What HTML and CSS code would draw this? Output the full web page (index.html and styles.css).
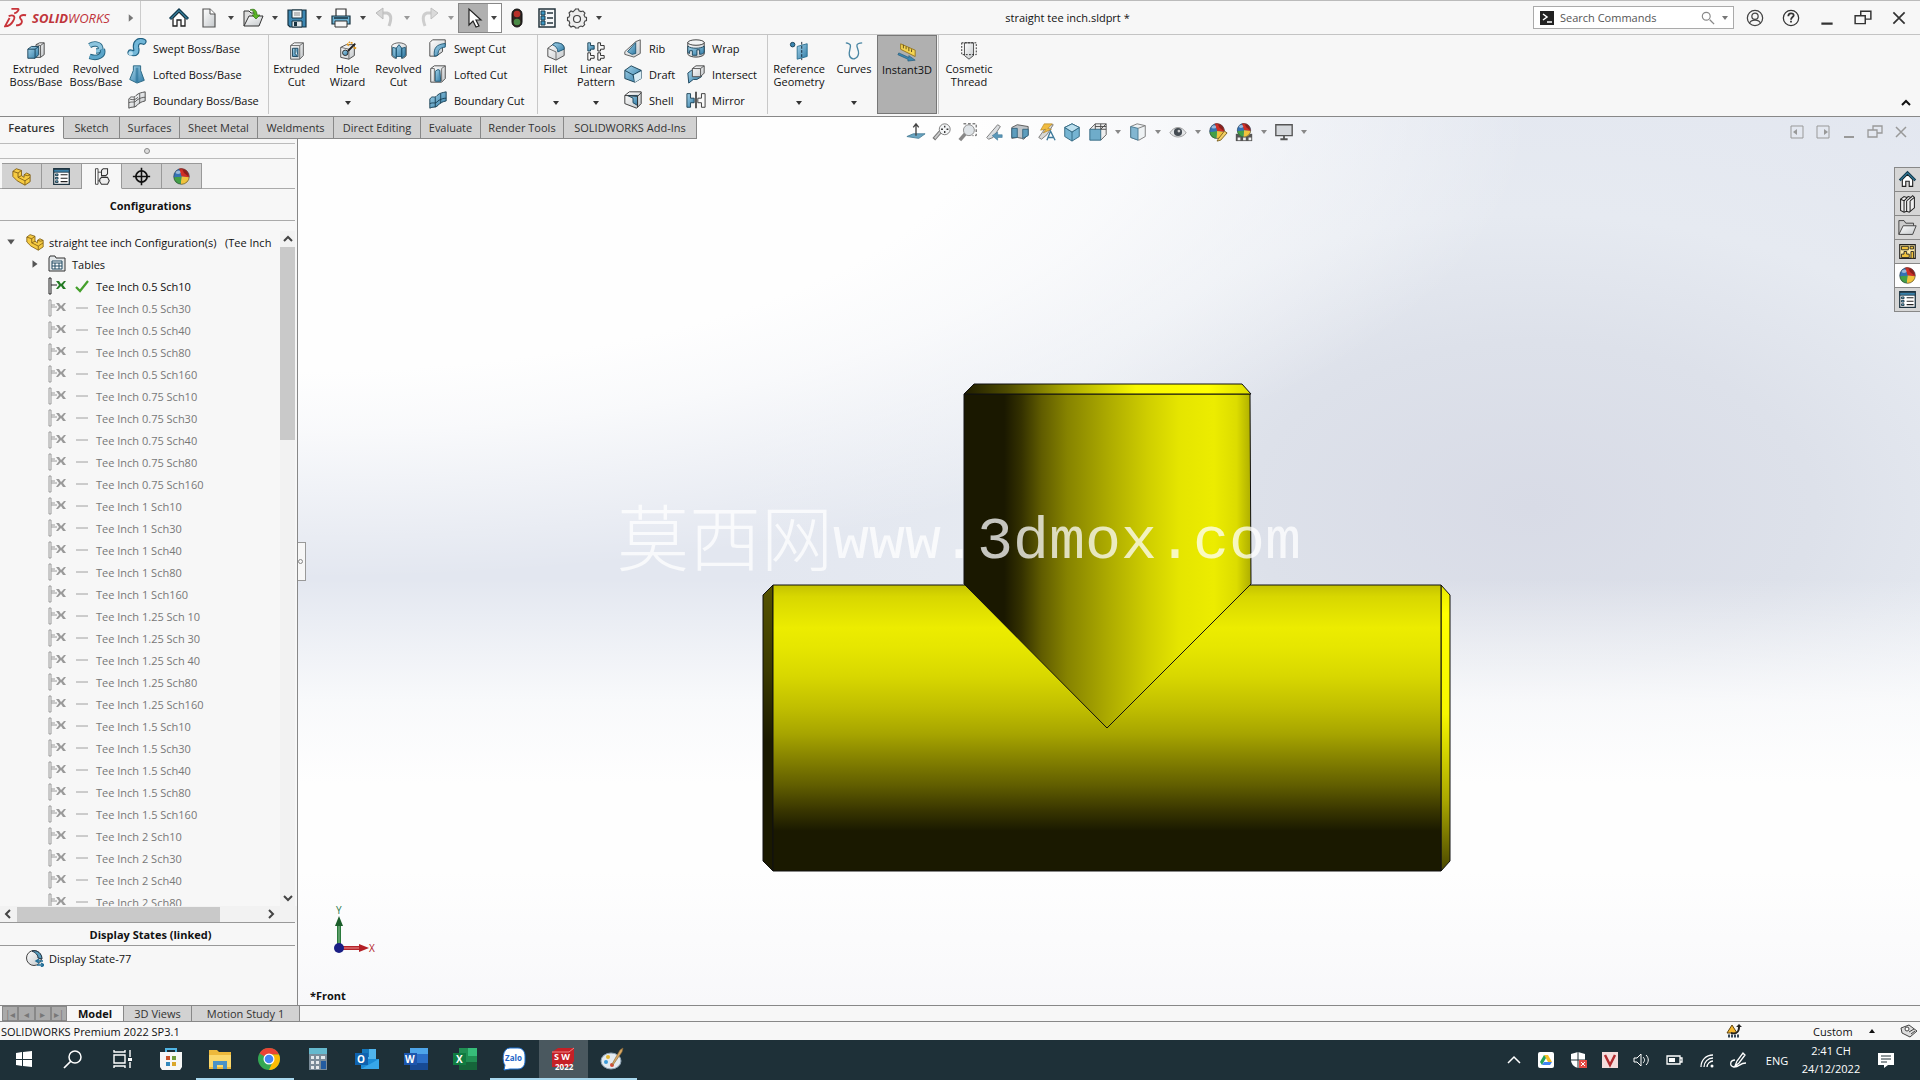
FILE: index.html
```html
<!DOCTYPE html>
<html lang="en">
<head>
<meta charset="utf-8">
<title>straight tee inch.sldprt</title>
<link rel="stylesheet" href="styles.css">
</head>
<body>
<svg class="defs" aria-hidden="true">
  <defs>
    <linearGradient id="blue" x1="0" y1="0" x2="1" y2="1"><stop offset="0" stop-color="#a6d4ea"/><stop offset="1" stop-color="#2f7ba6"/></linearGradient>
    <linearGradient id="grey" x1="0" y1="0" x2="1" y2="1"><stop offset="0" stop-color="#fff"/><stop offset="1" stop-color="#c4c8cb"/></linearGradient>
    <symbol id="caret" viewBox="0 0 8 8"><path d="M1 2h6L4 6z" fill="currentColor"/></symbol>
    <symbol id="home" viewBox="0 0 22 22"><path d="M5 11v8h4v-6h4v6h4v-8l-6-6z" fill="#fff" stroke="#222" stroke-width="1.3"/><path d="M2 12 11 3l9 9" fill="none" stroke="#123b50" stroke-width="3"/><path d="M3 11.500 11 3.500l8 8" fill="none" stroke="#49a6c8" stroke-width="1"/></symbol>
    <symbol id="new" viewBox="0 0 22 22"><path d="M5 2h7l5 5v13H5z" fill="url(#grey)" stroke="#555" stroke-width="1.200"/><path d="M12 2v5h5" fill="#fff" stroke="#555"/></symbol>
    <symbol id="open" viewBox="0 0 22 22"><path d="M2 19V4h5l2 2h5v3" fill="#ddd" stroke="#333"/><path d="M2 19 7 9h14l-4 10z" fill="url(#grey)" stroke="#333"/><path d="M8 3c4-2 7 0 7 5h3l-4 4-4-4h2c0-3-1-5-4-5z" fill="#5cb526" stroke="#2d6f10" stroke-width=".7"/></symbol>
    <symbol id="save" viewBox="0 0 22 22"><path d="M2 3h18v17H4l-2-2z" fill="#3c87b2" stroke="#17313f" stroke-width="1.200"/><path d="M6 3h10v8H6z" fill="#f3f6f7" stroke="#17313f"/><path d="M8 6h6M8 8h6" stroke="#888"/><path d="M6 14h10v6H6z" fill="#dfe6e9" stroke="#17313f"/><path d="M8 15h3v4H8z" fill="#17313f"/></symbol>
    <symbol id="print" viewBox="0 0 22 22"><path d="M6 9V2h10v7" fill="#fff" stroke="#333" stroke-width="1.200"/><path d="M2 9h18v8H2z" fill="#6db2d3" stroke="#17313f" stroke-width="1.200"/><path d="M5 14h12v6H5z" fill="#f6f6f6" stroke="#333"/><path d="M4 11h14" stroke="#17313f" stroke-width="1.500"/></symbol>
    <symbol id="undo" viewBox="0 0 22 22"><path d="M4 6h9c4 1 5 5 2 13" fill="none" stroke="#c9c9c9" stroke-width="3"/><path d="M9 1 2 6l7 6z" fill="#d6d6d6" stroke="#bbb"/></symbol>
    <symbol id="redo" viewBox="0 0 22 22"><path d="M18 6H9c-4 1-5 5-2 13" fill="none" stroke="#cecece" stroke-width="3"/><path d="M13 1l7 5-7 6z" fill="#dadada" stroke="#c0c0c0"/></symbol>
    <symbol id="pointer" viewBox="0 0 22 22"><path d="M6 2v16l4-4 3 6 3-1-3-6h5z" fill="#fff" stroke="#222" stroke-width="1.200"/></symbol>
    <symbol id="traffic" viewBox="0 0 22 22"><rect x="6" y="2" width="10" height="18" rx="5" fill="#2d2420" stroke="#111"/><circle cx="11" cy="7" r="3.300" fill="#b8302a"/><circle cx="11" cy="15" r="3.300" fill="#4a8b46"/></symbol>
    <symbol id="list" viewBox="0 0 22 22"><path d="M3 2h16v18H3z" fill="#f5f7f8" stroke="#24343d" stroke-width="1.500"/><path d="M5 4h4v4H5zM5 9h4v4H5zM5 14h4v4H5z" fill="#3c97c4" stroke="#1d3c4c"/><path d="M11 6h6M11 11h6M11 16h6" stroke="#24343d" stroke-width="1.500"/></symbol>
    <symbol id="gear" viewBox="0 0 22 22"><path d="m9 3 .5-1h3l.5 1.800 2 .8L17 4l2 2-1 2 1 2 1.500.5v3L19 14l-1 2 .7 1.700-2 2L15 19l-2 .8-.5 1.200h-3L9 20l-2-.8-2 .8-2-2 .8-2L3 14l-1.500-.5v-3L3 10l.8-2L3 6l2-2 2 .8z" fill="#eee" stroke="#444" stroke-width="1.100"/><circle cx="11" cy="12" r="3.500" fill="#f7f7f7" stroke="#444" stroke-width="1.200"/></symbol>
    <symbol id="extrude" viewBox="0 0 22 22"><path d="M11 4l4-2h5v13l-4 3h-5z" fill="url(#grey)" stroke="#444"/><path d="M16 5v13M11 4l5 1 4-3" stroke="#555" fill="none"/><path d="M2 9l4-3h8v9l-4 4H2z" fill="url(#blue)" stroke="#174057"/><path d="M2 9h8v10M10 9l4-3" fill="none" stroke="#174057"/></symbol>
    <symbol id="revolve" viewBox="0 0 22 22"><path d="M4 5c5-3 11-2 12 2 1 3-2 4-5 4" fill="none" stroke="#23627f" stroke-width="6"/><path d="M4 5c5-3 11-2 12 2 1 3-2 4-5 4" fill="none" stroke="#8cc5df" stroke-width="4"/><path d="M18 9c2 7-5 11-14 8" fill="none" stroke="#23627f" stroke-width="6"/><path d="M18 9c2 7-5 11-14 8" fill="none" stroke="#5ba5c9" stroke-width="4"/></symbol>
    <symbol id="sweep" viewBox="0 0 22 22"><path d="M4 16c6 2 7-1 6-5C9 5 13 2 18 4" fill="none" stroke="#1f5f80" stroke-width="7" stroke-linecap="round"/><path d="M4 16c6 2 7-1 6-5C9 5 13 2 18 4" fill="none" stroke="#72b7d8" stroke-width="4.500" stroke-linecap="round"/><circle cx="4" cy="17" r="2.500" fill="#b9dff0"/></symbol>
    <symbol id="loft" viewBox="0 0 22 22"><path d="M7 2h8v5l4 11-8 3-8-4 4-10z" fill="url(#blue)" stroke="#23627f"/><path d="M11 4v16" stroke="#246f96" stroke-width="3" opacity=".6"/></symbol>
    <symbol id="boundary" viewBox="0 0 22 22"><path d="M2 10c3-5 5 0 8-4 3-3 6-3 10-4v10c-4 1-7 2-9 5-3 3-6 1-9 3z" fill="url(#grey)" stroke="#444"/><path d="M2 14c4-2 6 1 9-3 3-2 6-3 9-3M8 8v11M14 4v11M3 10c4 1 6 1 9-2" fill="none" stroke="#555"/></symbol>
    <symbol id="boundarycut" viewBox="0 0 22 22"><path d="M2 10c3-5 5 0 8-4 3-3 6-3 10-4v10c-4 1-7 2-9 5-3 3-6 1-9 3z" fill="url(#blue)" stroke="#173e52"/><path d="M2 15c4-2 6 1 9-3 3-2 6-3 9-3M8 8v11M14 4v11" fill="none" stroke="#173e52"/></symbol>
    <symbol id="excut" viewBox="0 0 22 22"><path d="M4 5l4-3h10v14l-4 4H4z" fill="url(#grey)" stroke="#555"/><path d="M4 5h10v15M14 5l4-3" fill="none" stroke="#666"/><path d="M6 8h6v9H6z" fill="url(#blue)" stroke="#174057"/><path d="M9 8v6l3 3" fill="#e8f3f7" stroke="#174057"/></symbol>
    <symbol id="hole" viewBox="0 0 22 22"><path d="M3 7l6-3h9v12l-6 4-9-2z" fill="url(#grey)" stroke="#444"/><path d="M3 7l9 2 6-5M12 9v11" fill="none" stroke="#666"/><circle cx="8" cy="13" r="3" fill="url(#blue)" stroke="#222"/><path d="M11 11l8-8" stroke="#222" stroke-width="2"/><path d="M10 3l2 2M15 1v2M17 7l3 1M12 1l1 1" stroke="#e49b22" stroke-width="2"/></symbol>
    <symbol id="revcut" viewBox="0 0 22 22"><path d="M3 5c3-4 13-4 16 0v11c-2 3-4 3-5 3V8l-3-2-3 2v11c-2 0-4-1-5-3z" fill="url(#grey)" stroke="#555"/><path d="M4 7l4 1v11l-4-3zM18 7l-4 1v11l4-3zM8 8l3-4 3 4v9H8z" fill="url(#blue)" stroke="#1f5673"/></symbol>
    <symbol id="sweepcut" viewBox="0 0 22 22"><path d="M2 5l3-3h14v6l-3 2v5l-7 5H2z" fill="url(#grey)" stroke="#444"/><path d="M7 20C6 11 9 7 19 6v4c-6 1-8 3-8 9z" fill="url(#blue)" stroke="#1f5673"/></symbol>
    <symbol id="loftcut" viewBox="0 0 22 22"><path d="M3 5l4-3h12v14l-4 4H3z" fill="url(#grey)" stroke="#444"/><path d="M8 8l3-2 2 1 1 12H8z" fill="url(#blue)" stroke="#1f5673"/><path d="M3 5h4v14M15 5v14M15 5l4-3" fill="none" stroke="#666"/></symbol>
    <symbol id="fillet" viewBox="0 0 22 22"><path d="M2 8l8-6c6 0 10 2 10 6v8l-9 5-9-4z" fill="url(#grey)" stroke="#444"/><path d="M7 4l3-2c7 0 10 2 10 7l-7 3c0-4-2-6-6-8z" fill="url(#blue)" stroke="#1f5673"/><path d="M2 8l9 4v9" fill="none" stroke="#666"/></symbol>
    <symbol id="pattern" viewBox="0 0 22 22"><path d="M2 2h3v3h4v4H5v2H2z" fill="url(#blue)" stroke="#173e52"/><path d="M13 2h3v3h4v4h-4v2h-3zM2 13h3v3h4v3H5v2H2zM13 13h3v3h4v3h-4v2h-3z" fill="#fafafa" stroke="#222"/></symbol>
    <symbol id="rib" viewBox="0 0 22 22"><path d="M2 15L14 4l5-2v15l-7 4-10-3z" fill="url(#grey)" stroke="#555"/><path d="M5 15L14 5v12l-4 1z" fill="url(#blue)" stroke="#1f5673"/></symbol>
    <symbol id="draft" viewBox="0 0 22 22"><path d="M2 7l7-5 11 5v9l-7 4-11-4z" fill="url(#blue)" stroke="#173e52"/><path d="M2 7l9 5 9-5M11 12l2 8" fill="none" stroke="#173e52"/><path d="M12 12l8-4v8l-7 4z" fill="#d8ebf3"/></symbol>
    <symbol id="shell" viewBox="0 0 22 22"><path d="M2 6l5-4h13v13l-5 5-13-5z" fill="url(#grey)" stroke="#333"/><path d="M5 6h11v11l-5-3V9z" fill="url(#blue)" stroke="#174057"/><path d="M2 6l14 1 4-4M16 7v12" fill="none" stroke="#333"/></symbol>
    <symbol id="wrap" viewBox="0 0 22 22"><path d="M2 5v13c3 4 15 4 18 0V5z" fill="url(#grey)" stroke="#333"/><path d="M2 9c4 3 14 3 18 0v7c-2 2-4 2-5 2v-5h-3v6H7v-5H4v3l-2-1z" fill="url(#blue)" stroke="#174057"/><ellipse cx="11" cy="5" rx="9" ry="3" fill="#f2f4f5" stroke="#333"/></symbol>
    <symbol id="intersect" viewBox="0 0 22 22"><path d="M2 10l4-3h11v7l-5 3H8l-5 4z" fill="url(#blue)" stroke="#174057"/><path d="M7 5l4-3h9v8l-4 4H7z" fill="url(#grey)" stroke="#444"/><path d="M7 5h9v9M16 5l4-3" fill="none" stroke="#555"/></symbol>
    <symbol id="mirror" viewBox="0 0 22 22"><path d="M1 4h4v5h4v5H5v5H1z" fill="url(#blue)" stroke="#173e52"/><path d="M11 2v18" stroke="#111" stroke-width="1.500"/><path d="M21 4h-4v5h-4v5h4v5h4z" fill="#fafafa" stroke="#333"/></symbol>
    <symbol id="refgeo" viewBox="0 0 22 22"><circle cx="4" cy="4" r="2.500" fill="#3c87b2" stroke="#173e52"/><path d="M9 6l11-3v14L9 20z" fill="url(#blue)" stroke="#2b6f91"/><path d="M14 1v20" stroke="#123" stroke-dasharray="3 1.500"/></symbol>
    <symbol id="curves" viewBox="0 0 22 22"><path d="M2 2c10 1 2 8 4 14 2 6 9 4 10-2C17 8 9 3 20 2" fill="none" stroke="#4b87a4" stroke-width="1.500"/></symbol>
    <symbol id="instant" viewBox="0 0 22 22"><path d="M4 2l16 7v7L4 8z" fill="#f5d552" stroke="#96751a"/><path d="M7 3v4M10 5v3M13 6v4M16 8v3" stroke="#5b4713"/><path d="M2 12l11 5v-2l7 5-8 1v-2L1 14z" fill="#3c87b2" stroke="#1f5673" stroke-width=".7"/></symbol>
    <symbol id="thread" viewBox="0 0 22 22"><path d="M6 2h10v14l-5 4-5-4z" fill="url(#grey)" stroke="#444"/><path d="M3 2h16v13H3z" fill="none" stroke="#222" stroke-dasharray="2 1.500"/></symbol>
    <symbol id="normal" viewBox="0 0 22 22"><path d="M1 16l7-3h13l-7 5z" fill="#6aa5c2" stroke="#4a8099"/><path d="M11 15V3M8 6l3-4 3 4" fill="none" stroke="#444" stroke-width="1.500"/></symbol>
    <symbol id="zoomfit" viewBox="0 0 22 22"><path d="M2 19l7-8" stroke="#777" stroke-width="4"/><path d="M3 18l6-7" stroke="#ccc" stroke-width="2"/><circle cx="14" cy="8" r="6" fill="#f3f5f6" stroke="#777"/><path d="M14 4v2M14 10v2M10 8h2M16 8h2" stroke="#333" stroke-width="1.500"/></symbol>
    <symbol id="zoomarea" viewBox="0 0 22 22"><path d="M6 2h14v13h-4" fill="none" stroke="#333" stroke-dasharray="3 2"/><path d="M2 20l6-7" stroke="#888" stroke-width="4"/><circle cx="12" cy="9" r="6" fill="#dfe4e8" stroke="#888"/></symbol>
    <symbol id="prev" viewBox="0 0 22 22"><path d="M3 17L15 3l3 2-8 12-5 2z" fill="#dadde0" stroke="#777"/><path d="M20 14v3h-5v3l-6-5 6-4v3z" fill="#5997b9" stroke="#3b7594" stroke-width=".6"/></symbol>
    <symbol id="section" viewBox="0 0 22 22"><path d="M2 6l6-3 12 2v9l-5 5-2-1-5-1-6 1z" fill="#bfc4c8" stroke="#555"/><path d="M2 7h6v10H2zM14 8h6v7l-6 3z" fill="#5d9dbd" stroke="#36657e"/></symbol>
    <symbol id="annot" viewBox="0 0 22 22"><path d="M3 17L13 3l6 0-7 11-6 5z" fill="#d8d8d5" stroke="#777"/><path d="M9 2h9l-5 5 4 1-9 4 3-4-6 1z" fill="#f0bc41" stroke="#a7781c" stroke-width=".6"/><path d="M12 20l4-10 5 10M13 17h6" fill="none" stroke="#3f7a9b" stroke-width="1.500"/></symbol>
    <symbol id="cube" viewBox="0 0 22 22"><path d="M11 2l8 4v10l-8 5-8-5V6z" fill="#75b4d2" stroke="#316780"/><path d="M3 6l8 5 8-5M11 11v10" stroke="#316780" fill="none"/><path d="M11 2l8 4-8 5-8-5z" fill="#bde0ef" stroke="#316780"/></symbol>
    <symbol id="orient" viewBox="0 0 22 22"><path d="M2 8l6-6h12v12l-6 6" fill="#eee" stroke="#555"/><path d="M2 8h12v12H2z" fill="#6facca" stroke="#316780"/><path d="M8 2v6M14 2v6l6-6M14 8h6M8 5h12" fill="none" stroke="#444"/></symbol>
    <symbol id="style" viewBox="0 0 22 22"><path d="M3 5l7-3 9 2v12l-7 4-9-3z" fill="#eef2f4" stroke="#777"/><path d="M3 5l8 2v13l-8-3z" fill="#82b6d1" stroke="#47778f"/><path d="M11 7l8-3" stroke="#777"/></symbol>
    <symbol id="eye" viewBox="0 0 22 22"><path d="M2 12c5-8 13-8 18 0-5 6-13 6-18 0z" fill="#e4e6e8" stroke="#999"/><circle cx="11" cy="11" r="4.500" fill="#444b52"/><circle cx="12" cy="10" r="1.500" fill="#ccc"/></symbol>
    <symbol id="ball" viewBox="0 0 22 22"><circle cx="11" cy="11" r="9" fill="#2f7fc0"/><path d="M11 11 8 2c6-2 12 3 12 10z" fill="#d02f26"/><path d="M11 11l9 1c0 5-5 9-10 8z" fill="#f1c33c"/><path d="M11 11l-1 9c-5 0-8-4-8-8z" fill="#43a047"/><path d="M11 11l-9 1c0-5 2-8 6-10z" fill="#3572b5"/><path d="M12 3c5 0 7 4 7 8l-5-4z" fill="#5c1717" opacity=".6"/><ellipse cx="7" cy="6" rx="3" ry="2" fill="#fff" opacity=".5"/><circle cx="11" cy="11" r="9" fill="none" stroke="#333" stroke-width=".6"/></symbol>
    <symbol id="ballpen" viewBox="0 0 22 22"><use href="#ball" width="20" height="20"/><path d="M11 19l7-9 3 2-7 8-4 1z" fill="#f2cf66" stroke="#7c6120"/></symbol>
    <symbol id="ballscene" viewBox="0 0 22 22"><path d="M2 13h18v8H2z" fill="#555"/><path d="M4 17h3v3H4zM10 17h3v3h-3zM16 17h3v3h-3z" fill="#eee"/><use href="#ball" x="2" width="18" height="18"/></symbol>
    <symbol id="monitor" viewBox="0 0 22 22"><path d="M2 3h18v12H2z" fill="#d5d8dc" stroke="#555" stroke-width="1.500"/><path d="M11 15v4M7 19h8" stroke="#555" stroke-width="2"/></symbol>
    <symbol id="part" viewBox="0 0 22 22"><path d="M1 5l4-3 6 2v6l3 2V9l3-2 4 2v8l-6 4-9-5-5-5z" fill="#f6cb42" stroke="#7d5c12"/><path d="M1 5l6 2v5l8 4v5M7 7l4-3M15 16l6-4M14 9l4 1 3-1M7 12l4-2" fill="none" stroke="#7d5c12"/></symbol>
    <symbol id="props" viewBox="0 0 22 22"><path d="M2 2h18v18H2z" fill="#fff" stroke="#1d3340" stroke-width="1.500"/><path d="M2 3h18v3H2z" fill="#3c87b2" stroke="#1d3340"/><path d="M4 8h3v2H4zM4 12h3v2H4zM4 16h3v2H4z" fill="#6fb5d6" stroke="#1d3340"/><path d="M10 9h8M10 13h8M10 17h8" stroke="#222" stroke-width="1.300"/></symbol>
    <symbol id="config" viewBox="0 0 22 22"><path d="M4 2h3v18H4zM7 6h4M7 16h4" fill="#fff" stroke="#333"/><path d="M11 4l2-2h5v6l-2 2h-5zM9 14l2-2h7l2 4-2 4h-7l-2-3z" fill="#eee" stroke="#333" stroke-width="1.200"/></symbol>
    <symbol id="target" viewBox="0 0 22 22"><circle cx="11" cy="11" r="6.500" fill="none" stroke="#111" stroke-width="2"/><path d="M11 1v20M1 11h20" stroke="#111" stroke-width="1.800"/></symbol>
    <symbol id="tables" viewBox="0 0 18 18"><path d="M1 16V3l1-2h5l1 2h9v13z" fill="#e4e8ea" stroke="#333"/><path d="M4 6h10v8H4z" fill="#fff" stroke="#204b63"/><path d="M4 8h10M4 11h10M7 8v6M11 8v6" stroke="#204b63"/></symbol>
    <symbol id="cfg" viewBox="0 0 18 18"><path d="M1 1h2v16H1zM3 8h6M3 6h4" fill="none" stroke="currentColor"/><path d="M8 4l3 0 2 3 3-3h2l-3 4 3 4h-3l-2-3-3 3H8l3-4z" fill="currentColor"/></symbol>
    <symbol id="cfgon" viewBox="0 0 18 18"><path d="M1 1h2v16H1zM3 8h6" fill="none" stroke="#222"/><path d="M8 4h3l2 3 3-3h2l-3 4 3 4h-3l-2-3-3 3H8l3-4z" fill="#237a24"/></symbol>
    <symbol id="check" viewBox="0 0 16 16"><path d="M2 9l4 4 8-10" fill="none" stroke="#45a02c" stroke-width="2.200"/></symbol>
    <symbol id="dash" viewBox="0 0 16 16"><path d="M2 8h12" stroke="#a0a0a0"/></symbol>
    <symbol id="state" viewBox="0 0 18 18"><circle cx="8" cy="9" r="7.500" fill="url(#grey)" stroke="#444"/><path d="M6 2a8 8 0 0 1 10 8l-4-1c0-3-2-5-6-7z" fill="#5a9dbd" stroke="#234"/><path d="M11 12h6M11 16h6M13 10l-3 2 3 2M15 14l3 2-3 2" stroke="#236f98" fill="none" stroke-width="1.500"/></symbol>
    <symbol id="books" viewBox="0 0 22 22"><path d="M3 6l4-3 3 1 2-1 3 1 2-2 2 2v12l-6 5-3-1-3 1-4-2z" fill="#eee" stroke="#222" stroke-width="1.200"/><path d="M3 6l4 2v13M7 8l4-4M10 8v12M10 8l5-4M14 8v12M14 8l5-4" fill="none" stroke="#222" stroke-width="1.200"/></symbol>
    <symbol id="folder" viewBox="0 0 22 22"><path d="M1 19V3h6l2 3h9v3" fill="#ccc" stroke="#333"/><path d="M1 19L6 9h15l-4 10z" fill="url(#grey)" stroke="#333"/></symbol>
    <symbol id="palette" viewBox="0 0 22 22"><path d="M2 3h18v16H2z" fill="#fbe9a5" stroke="#222" stroke-width="1.300"/><path d="M4 5h8v4H4zM14 5h4v3h-4zM7 11h3v3h3v4H4v-4h3zM15 11h3v8h-3z" fill="#f0c23c" stroke="#222"/></symbol>
    <symbol id="restore" viewBox="0 0 16 16"><path d="M6 6V2h9v7h-5M1 6h9v7H1z" fill="none" stroke="currentColor" stroke-width="1.300"/></symbol>
    <symbol id="close" viewBox="0 0 16 16"><path d="M3 3l10 10M13 3L3 13" stroke="currentColor" stroke-width="1.500"/></symbol>
    <symbol id="min" viewBox="0 0 16 16"><path d="M3 13h10" stroke="currentColor" stroke-width="2"/></symbol>
    <symbol id="paneleft" viewBox="0 0 16 16"><path d="M2 2h12v12H2z" fill="none" stroke="currentColor"/><path d="M8 5v6L4 8z" fill="currentColor"/></symbol>
    <symbol id="paneright" viewBox="0 0 16 16"><path d="M2 2h12v12H2z" fill="none" stroke="currentColor"/><path d="M9 5v6l4-3z" fill="currentColor"/></symbol>
    <symbol id="up" viewBox="0 0 12 12"><path d="M2 8l4-4 4 4" fill="none" stroke="currentColor" stroke-width="2"/></symbol>
  </defs>
</svg>

<header class="titlebar">
  <div class="brand">
    <svg class="brand-mark" viewBox="0 0 26 24"><path d="M8 2h7c2 0 0 4-4 5M5 10c5-2 8 0 5 5-2 4-6 6-9 6l5-9M24 9c-5-1-8 1-6 4 3 3 1 7-5 7" fill="none" stroke="#c8343a" stroke-width="2"/></svg>
    <span class="brand-name"><b>SOLID</b>WORKS</span>
    <svg class="brand-arrow" viewBox="0 0 8 10"><path d="M1 0v10l6-5z" fill="#777"/></svg>
  </div>
  <nav class="quick">
    <button class="ib" aria-label="Home"><svg><use href="#home"/></svg></button>
    <div class="split"><button class="ib" aria-label="New"><svg><use href="#new"/></svg></button><button class="dd" aria-label="New options"><svg><use href="#caret"/></svg></button></div>
    <div class="split"><button class="ib" aria-label="Open"><svg><use href="#open"/></svg></button><button class="dd" aria-label="Open options"><svg><use href="#caret"/></svg></button></div>
    <div class="split"><button class="ib" aria-label="Save"><svg><use href="#save"/></svg></button><button class="dd" aria-label="Save options"><svg><use href="#caret"/></svg></button></div>
    <div class="split"><button class="ib" aria-label="Print"><svg><use href="#print"/></svg></button><button class="dd" aria-label="Print options"><svg><use href="#caret"/></svg></button></div>
    <div class="split dim"><button class="ib" aria-label="Undo"><svg><use href="#undo"/></svg></button><button class="dd" aria-label="Undo options"><svg><use href="#caret"/></svg></button></div>
    <div class="split dim"><button class="ib" aria-label="Redo"><svg><use href="#redo"/></svg></button><button class="dd" aria-label="Redo options"><svg><use href="#caret"/></svg></button></div>
    <div class="select-tool"><button class="ib" aria-label="Select"><svg><use href="#pointer"/></svg></button><button class="dd" aria-label="Select options"><svg><use href="#caret"/></svg></button></div>
    <div class="singles">
      <button class="ib" aria-label="Rebuild"><svg><use href="#traffic"/></svg></button>
      <button class="ib" aria-label="File properties"><svg><use href="#list"/></svg></button>
      <div class="split"><button class="ib" aria-label="Options"><svg><use href="#gear"/></svg></button><button class="dd" aria-label="Options menu"><svg><use href="#caret"/></svg></button></div>
    </div>
  </nav>
  <h1 class="doc-title">straight tee inch.sldprt *</h1>
  <div class="title-right">
    <label class="search">
      <svg class="term" viewBox="0 0 14 14"><path d="M0 0h14v14H0z" fill="#222"/><path d="M3 3l4 3-4 3M7 11h5" fill="none" stroke="#fff" stroke-width="1.500"/></svg>
      <input type="text" placeholder="Search Commands" aria-label="Search Commands">
      <svg class="lens" viewBox="0 0 16 16"><circle cx="6" cy="6" r="4.500" fill="none" stroke="#888" stroke-width="1.300"/><path d="M10 10l5 5" stroke="#888" stroke-width="1.500"/></svg>
      <svg class="tiny"><use href="#caret"/></svg>
    </label>
    <div class="window-buttons">
      <button aria-label="Account"><svg viewBox="0 0 20 20"><g fill="none" stroke="#444" stroke-width="1.400"><circle cx="10" cy="10" r="8.500"/><circle cx="10" cy="8" r="3.500"/><path d="M4 16c1-5 11-5 12 0"/></g></svg></button>
      <button aria-label="Help"><svg viewBox="0 0 20 20"><g fill="none" stroke="#333"><circle cx="10" cy="10" r="8.500" stroke-width="1.400"/><path d="M7 8c0-4 6-4 6-1 0 2-3 2-3 5M10 13v2" stroke-width="2"/></g></svg></button>
      <button aria-label="Minimize"><svg><use href="#min"/></svg></button>
      <button aria-label="Restore"><svg><use href="#restore"/></svg></button>
      <button aria-label="Close"><svg><use href="#close"/></svg></button>
    </div>
  </div>
</header>

<section class="ribbon">
  <div class="group g1">
    <button class="big w60"><svg><use href="#extrude"/></svg><span>Extruded<br>Boss/Base</span></button>
    <button class="big w60"><svg><use href="#revolve"/></svg><span>Revolved<br>Boss/Base</span></button>
    <div class="stack">
      <button><svg><use href="#sweep"/></svg>Swept Boss/Base</button>
      <button><svg><use href="#loft"/></svg>Lofted Boss/Base</button>
      <button><svg><use href="#boundary"/></svg>Boundary Boss/Base</button>
    </div>
  </div>
  <div class="group g2">
    <button class="big w51"><svg><use href="#excut"/></svg><span>Extruded<br>Cut</span></button>
    <button class="big w51"><svg><use href="#hole"/></svg><span>Hole<br>Wizard</span><svg class="more"><use href="#caret"/></svg></button>
    <button class="big w51"><svg><use href="#revcut"/></svg><span>Revolved<br>Cut</span></button>
    <div class="stack">
      <button><svg><use href="#sweepcut"/></svg>Swept Cut</button>
      <button><svg><use href="#loftcut"/></svg>Lofted Cut</button>
      <button><svg><use href="#boundarycut"/></svg>Boundary Cut</button>
    </div>
  </div>
  <div class="group g3">
    <button class="big w36"><svg><use href="#fillet"/></svg><span>Fillet</span><svg class="more"><use href="#caret"/></svg></button>
    <button class="big w44"><svg><use href="#pattern"/></svg><span>Linear<br>Pattern</span><svg class="more"><use href="#caret"/></svg></button>
    <div class="stack narrow">
      <button><svg><use href="#rib"/></svg>Rib</button>
      <button><svg><use href="#draft"/></svg>Draft</button>
      <button><svg><use href="#shell"/></svg>Shell</button>
    </div>
    <div class="stack">
      <button><svg><use href="#wrap"/></svg>Wrap</button>
      <button><svg><use href="#intersect"/></svg>Intersect</button>
      <button><svg><use href="#mirror"/></svg>Mirror</button>
    </div>
  </div>
  <div class="group g4">
    <button class="big w60"><svg><use href="#refgeo"/></svg><span>Reference<br>Geometry</span><svg class="more"><use href="#caret"/></svg></button>
    <button class="big w44"><svg><use href="#curves"/></svg><span>Curves</span><svg class="more"><use href="#caret"/></svg></button>
    <button class="big w60 pressed"><svg><use href="#instant"/></svg><span>Instant3D</span></button>
  </div>
  <div class="group g5">
    <button class="big w60"><svg><use href="#thread"/></svg><span>Cosmetic<br>Thread</span></button>
  </div>
  <button class="collapse" aria-label="Collapse ribbon"><svg><use href="#up"/></svg></button>
</section>

<main class="workspace">
  <nav class="cmd-tabs">
    <button class="on">Features</button><button class="t56">Sketch</button><button class="t60">Surfaces</button><button class="t78">Sheet Metal</button><button class="t76">Weldments</button><button class="t87">Direct Editing</button><button class="t60">Evaluate</button><button class="t83">Render Tools</button><button class="t134">SOLIDWORKS Add-Ins</button>
  </nav>

  <aside class="panel">
    <div class="grip"><i></i></div>
    <nav class="panel-tabs">
      <button aria-label="Feature tree"><svg><use href="#part"/></svg></button>
      <button aria-label="Properties"><svg><use href="#props"/></svg></button>
      <button class="on" aria-label="Configurations"><svg><use href="#config"/></svg></button>
      <button aria-label="Dimensions"><svg><use href="#target"/></svg></button>
      <button aria-label="Display"><svg><use href="#ball"/></svg></button>
    </nav>
    <h2 class="panel-title">Configurations</h2>
    <div class="tree-wrap">
      <ul class="tree">
        <li class="root"><svg class="tw"><use href="#caret"/></svg><svg class="ic"><use href="#part"/></svg>straight tee inch Configuration(s)&nbsp;&nbsp; (Tee Inch</li>
        <li class="folder"><svg class="tw right"><use href="#caret"/></svg><svg class="ic"><use href="#tables"/></svg>Tables</li>
        <li class="active"><svg class="ic"><use href="#cfgon"/></svg><svg class="mk"><use href="#check"/></svg>Tee Inch 0.5 Sch10</li>
        <li><svg class="ic"><use href="#cfg"/></svg><svg class="mk"><use href="#dash"/></svg>Tee Inch 0.5 Sch30</li>
        <li><svg class="ic"><use href="#cfg"/></svg><svg class="mk"><use href="#dash"/></svg>Tee Inch 0.5 Sch40</li>
        <li><svg class="ic"><use href="#cfg"/></svg><svg class="mk"><use href="#dash"/></svg>Tee Inch 0.5 Sch80</li>
        <li><svg class="ic"><use href="#cfg"/></svg><svg class="mk"><use href="#dash"/></svg>Tee Inch 0.5 Sch160</li>
        <li><svg class="ic"><use href="#cfg"/></svg><svg class="mk"><use href="#dash"/></svg>Tee Inch 0.75 Sch10</li>
        <li><svg class="ic"><use href="#cfg"/></svg><svg class="mk"><use href="#dash"/></svg>Tee Inch 0.75 Sch30</li>
        <li><svg class="ic"><use href="#cfg"/></svg><svg class="mk"><use href="#dash"/></svg>Tee Inch 0.75 Sch40</li>
        <li><svg class="ic"><use href="#cfg"/></svg><svg class="mk"><use href="#dash"/></svg>Tee Inch 0.75 Sch80</li>
        <li><svg class="ic"><use href="#cfg"/></svg><svg class="mk"><use href="#dash"/></svg>Tee Inch 0.75 Sch160</li>
        <li><svg class="ic"><use href="#cfg"/></svg><svg class="mk"><use href="#dash"/></svg>Tee Inch 1 Sch10</li>
        <li><svg class="ic"><use href="#cfg"/></svg><svg class="mk"><use href="#dash"/></svg>Tee Inch 1 Sch30</li>
        <li><svg class="ic"><use href="#cfg"/></svg><svg class="mk"><use href="#dash"/></svg>Tee Inch 1 Sch40</li>
        <li><svg class="ic"><use href="#cfg"/></svg><svg class="mk"><use href="#dash"/></svg>Tee Inch 1 Sch80</li>
        <li><svg class="ic"><use href="#cfg"/></svg><svg class="mk"><use href="#dash"/></svg>Tee Inch 1 Sch160</li>
        <li><svg class="ic"><use href="#cfg"/></svg><svg class="mk"><use href="#dash"/></svg>Tee Inch 1.25 Sch 10</li>
        <li><svg class="ic"><use href="#cfg"/></svg><svg class="mk"><use href="#dash"/></svg>Tee Inch 1.25 Sch 30</li>
        <li><svg class="ic"><use href="#cfg"/></svg><svg class="mk"><use href="#dash"/></svg>Tee Inch 1.25 Sch 40</li>
        <li><svg class="ic"><use href="#cfg"/></svg><svg class="mk"><use href="#dash"/></svg>Tee Inch 1.25 Sch80</li>
        <li><svg class="ic"><use href="#cfg"/></svg><svg class="mk"><use href="#dash"/></svg>Tee Inch 1.25 Sch160</li>
        <li><svg class="ic"><use href="#cfg"/></svg><svg class="mk"><use href="#dash"/></svg>Tee Inch 1.5 Sch10</li>
        <li><svg class="ic"><use href="#cfg"/></svg><svg class="mk"><use href="#dash"/></svg>Tee Inch 1.5 Sch30</li>
        <li><svg class="ic"><use href="#cfg"/></svg><svg class="mk"><use href="#dash"/></svg>Tee Inch 1.5 Sch40</li>
        <li><svg class="ic"><use href="#cfg"/></svg><svg class="mk"><use href="#dash"/></svg>Tee Inch 1.5 Sch80</li>
        <li><svg class="ic"><use href="#cfg"/></svg><svg class="mk"><use href="#dash"/></svg>Tee Inch 1.5 Sch160</li>
        <li><svg class="ic"><use href="#cfg"/></svg><svg class="mk"><use href="#dash"/></svg>Tee Inch 2 Sch10</li>
        <li><svg class="ic"><use href="#cfg"/></svg><svg class="mk"><use href="#dash"/></svg>Tee Inch 2 Sch30</li>
        <li><svg class="ic"><use href="#cfg"/></svg><svg class="mk"><use href="#dash"/></svg>Tee Inch 2 Sch40</li>
        <li><svg class="ic"><use href="#cfg"/></svg><svg class="mk"><use href="#dash"/></svg>Tee Inch 2 Sch80</li>
      </ul>
      <div class="vscroll"><svg><use href="#up"/></svg><div class="vtrack"><i></i></div><svg class="flip"><use href="#up"/></svg></div>
    </div>
    <div class="hscroll"><svg class="l"><use href="#up"/></svg><div class="htrack"><i></i></div><svg class="r"><use href="#up"/></svg></div>
    <h2 class="states-title">Display States (linked)</h2>
    <div class="state"><svg><use href="#state"/></svg>Display State-77</div>
  </aside>

  <section class="viewport">
    <div class="hud">
      <button aria-label="Normal to"><svg><use href="#normal"/></svg></button>
      <button aria-label="Zoom to fit"><svg><use href="#zoomfit"/></svg></button>
      <button aria-label="Zoom to area"><svg><use href="#zoomarea"/></svg></button>
      <button aria-label="Previous view"><svg><use href="#prev"/></svg></button>
      <button aria-label="Section view"><svg><use href="#section"/></svg></button>
      <button aria-label="Annotation views"><svg><use href="#annot"/></svg></button>
      <button aria-label="Isometric"><svg><use href="#cube"/></svg></button>
      <button aria-label="View orientation"><svg><use href="#orient"/></svg></button>
      <button class="hd" aria-label="Orientation menu"><svg><use href="#caret"/></svg></button>
      <button aria-label="Display style"><svg><use href="#style"/></svg></button>
      <button class="hd" aria-label="Style menu"><svg><use href="#caret"/></svg></button>
      <button aria-label="Hide or show"><svg><use href="#eye"/></svg></button>
      <button class="hd" aria-label="Visibility menu"><svg><use href="#caret"/></svg></button>
      <button aria-label="Edit appearance"><svg><use href="#ballpen"/></svg></button>
      <button aria-label="Apply scene"><svg><use href="#ballscene"/></svg></button>
      <button class="hd" aria-label="Scene menu"><svg><use href="#caret"/></svg></button>
      <button aria-label="View settings"><svg><use href="#monitor"/></svg></button>
      <button class="hd" aria-label="View menu"><svg><use href="#caret"/></svg></button>
    </div>
    <div class="mdi">
      <button aria-label="Left pane"><svg><use href="#paneleft"/></svg></button>
      <button aria-label="Right pane"><svg><use href="#paneright"/></svg></button>
      <button aria-label="Minimize document"><svg><use href="#min"/></svg></button>
      <button aria-label="Restore document"><svg><use href="#restore"/></svg></button>
      <button aria-label="Close document"><svg><use href="#close"/></svg></button>
    </div>
    <nav class="taskpane">
      <button aria-label="Resources"><svg><use href="#home"/></svg></button>
      <button aria-label="Design library"><svg><use href="#books"/></svg></button>
      <button aria-label="File explorer"><svg><use href="#folder"/></svg></button>
      <button aria-label="View palette"><svg><use href="#palette"/></svg></button>
      <button class="on" aria-label="Appearances"><svg><use href="#ball"/></svg></button>
      <button aria-label="Custom properties"><svg><use href="#props"/></svg></button>
    </nav>
    <button class="splitter" aria-label="Collapse panel"><i></i></button>
    <svg class="model" viewBox="0 0 690 490">
      <defs>
        <linearGradient id="pv"><stop offset="0" stop-color="#1a1800"/><stop offset=".14" stop-color="#1a1800"/><stop offset=".2" stop-color="#343100"/><stop offset=".27" stop-color="#605c00"/><stop offset=".36" stop-color="#868300"/><stop offset=".5" stop-color="#acaa00"/><stop offset=".64" stop-color="#cfce00"/><stop offset=".75" stop-color="#e5e500"/><stop offset=".87" stop-color="#ecec00"/><stop offset=".95" stop-color="#dcdc00"/><stop offset="1" stop-color="#aeae00"/></linearGradient>
        <linearGradient id="ph" x2="0" y2="1"><stop offset="0" stop-color="#c4c200"/><stop offset=".04" stop-color="#d8d700"/><stop offset=".15" stop-color="#ecec00"/><stop offset=".22" stop-color="#e6e600"/><stop offset=".32" stop-color="#d8d700"/><stop offset=".43" stop-color="#c0be00"/><stop offset=".52" stop-color="#a7a500"/><stop offset=".6" stop-color="#888500"/><stop offset=".7" stop-color="#615e00"/><stop offset=".79" stop-color="#383500"/><stop offset=".86" stop-color="#1a1900"/><stop offset="1" stop-color="#1a1900"/></linearGradient>
        <linearGradient id="pt"><stop offset="0" stop-color="#1f1d00"/><stop offset=".15" stop-color="#4e4b00"/><stop offset=".35" stop-color="#a8a600"/><stop offset=".6" stop-color="#f8f800"/><stop offset=".85" stop-color="#ff0"/><stop offset="1" stop-color="#dede00"/></linearGradient>
        <linearGradient id="pl" x2="0" y2="1"><stop offset="0" stop-color="#565300"/><stop offset=".3" stop-color="#3c3a00"/><stop offset=".55" stop-color="#1a1900"/><stop offset="1" stop-color="#1a1900"/></linearGradient>
        <linearGradient id="pr" x2="0" y2="1"><stop offset="0" stop-color="#e8e800"/><stop offset=".1" stop-color="#ff0"/><stop offset=".45" stop-color="#f6f600"/><stop offset=".75" stop-color="#aaa800"/><stop offset="1" stop-color="#4a4700"/></linearGradient>
      </defs>
      <g stroke="#111" stroke-width="1" stroke-linejoin="round">
        <path d="M10 201 0 211v266l10 10z" fill="url(#pl)"/>
        <path d="M678 201l9 10v266l-9 10z" fill="url(#pr)"/>
        <path d="M10 201h668v286H10z" fill="url(#ph)"/>
        <path d="M201 10v190l143 144 144-144-1-190z" fill="url(#pv)"/>
        <path d="M201 10 211 0h268l9 10z" fill="url(#pt)"/>
      </g>
    </svg>
    <p class="watermark"><span>莫西网</span>www.3dmox.com</p>
    <svg class="triad" viewBox="0 0 50 50"><path d="M14 40V16" stroke="#2b7a3c" stroke-width="4"/><path d="M14 40V16" stroke="#8abf92" stroke-width="1"/><path d="M10 18 14 8l4 10z" fill="#1b5e2a"/><path d="M14 40h23" stroke="#b3232a" stroke-width="4"/><path d="M16 40h19" stroke="#ec8f8f" stroke-width="1"/><path d="M34 36l10 4-10 4z" fill="#b31e25"/><circle cx="14" cy="40" r="5" fill="#1a1e85"/></svg>
    <span class="axis y">Y</span><span class="axis x">X</span>
    <span class="view-name">*Front</span>
  </section>
</main>

<footer class="doc-tabs">
  <div class="pager"><button aria-label="First">|◂</button><button aria-label="Previous">◂</button><button aria-label="Next">▸</button><button aria-label="Last">▸|</button></div>
  <button class="on d57">Model</button><button class="d68">3D Views</button><button class="d108">Motion Study 1</button>
</footer>
<div class="status">
  <span class="product">SOLIDWORKS Premium 2022 SP3.1</span>
  <svg class="rebuild" viewBox="0 0 16 16"><path d="M1 10 6 2l5 8z" fill="#f3b52c" stroke="#5d4310"/><path d="M5 9c5 2 7-1 7-5l-2 0 3-3 3 3h-2c0 6-4 8-9 7z" fill="#222"/><path d="M2 13h12" stroke="#345" stroke-width="3" stroke-dasharray="2 1"/></svg>
  <span class="units">Custom</span>
  <svg class="tiny flip"><use href="#caret"/></svg>
  <svg class="tag" viewBox="0 0 18 14"><path d="M1 4l8-3 8 6-7 6-8-4z" fill="#ddd" stroke="#444"/><circle cx="7" cy="5" r="2" fill="#fff" stroke="#444"/><path d="M9 8l5-3M11 10l4-3" stroke="#444"/></svg>
</div>

<div class="taskbar">
  <nav class="apps">
    <button aria-label="Start"><svg viewBox="0 0 24 24"><path d="M4 6l6-1v7H4zM11 5l9-1v8h-9zM4 13h6v6l-6-1zM11 13h9v7l-9-1z" fill="#fff"/></svg></button>
    <button aria-label="Search"><svg viewBox="0 0 24 24"><circle cx="14" cy="10" r="6" fill="none" stroke="#fff" stroke-width="1.500"/><path d="M10 14l-7 7" stroke="#fff" stroke-width="1.700"/></svg></button>
    <button aria-label="Task view"><svg viewBox="0 0 24 24"><g fill="none" stroke="#fff" stroke-width="1.400"><path d="M4 8h11v8H4zM4 3v2h11V3M4 21v-2h11v2M20 3v7M20 15v6"/></g><path d="M18 11h4v3h-4z" fill="#fff"/></svg></button>
    <button aria-label="Store"><svg viewBox="0 0 24 24"><path d="M7 6V2h10v4" fill="none" stroke="#50b5e5" stroke-width="2"/><path d="M1 5h22v15l-2 3H3l-2-3z" fill="#f7f7f7"/><path d="M7 9h4v4H7z" fill="#c9532c"/><path d="M13 9h4v4h-4z" fill="#729c3a"/><path d="M7 15h4v4H7z" fill="#3389bd"/><path d="M13 15h4v4h-4z" fill="#dba72b"/></svg></button>
    <button class="run" aria-label="Explorer"><svg viewBox="0 0 24 24"><path d="M1 3h8l2 2h12v17H1z" fill="#edb93c"/><path d="M1 8h22v12H1z" fill="#fbd86c"/><path d="M5 22v-8h14v8h-4v-4H9v4z" fill="#4b92c7"/></svg></button>
    <button class="run" aria-label="Chrome"><svg viewBox="0 0 24 24"><circle cx="12" cy="12" r="11" fill="#34a853"/><path d="M12 12 2.500 6.500A11 11 0 0 1 22 7.500H12z" fill="#ea4335"/><path d="M12 12h5l-5 11A11 11 0 0 0 22 7.500H12z" fill="#fbbc05"/><circle cx="12" cy="12" r="5.500" fill="#fff"/><circle cx="12" cy="12" r="4.300" fill="#4285f4"/></svg></button>
    <button aria-label="Calculator"><svg viewBox="0 0 24 24"><path d="M3 1h18v22H3z" fill="#7b8c99"/><path d="M3 1h18v6H3z" fill="#65b9ce"/><path d="M5 9h3v3H5zM10 9h3v3h-3zM5 14h3v3H5zM10 14h3v3h-3zM5 19h3v3H5zM10 19h3v3h-3zM15 9h4v3h-4z" fill="#e4e9ec"/><path d="M15 14h5v8h-5z" fill="#235b9f"/></svg></button>
    <button aria-label="Outlook"><svg viewBox="0 0 24 24"><path d="M7 2h14v16H7z" fill="#50b4ec"/><path d="M7 2h7v8H7z" fill="#1477bd"/><path d="M6 12h18v10H6z" fill="#1b8bd5"/><path d="M24 12 6 22h18z" fill="#37a6e8"/><path d="M0 6h13v12H0z" fill="#0f62ae"/><text x="2" y="16" class="app-letter">O</text></svg></button>
    <button aria-label="Word"><svg viewBox="0 0 24 24"><path d="M6 1h18v22H6z" fill="#2b6fc8"/><path d="M6 1h18v6H6z" fill="#4ea5ea"/><path d="M6 16h18v7H6z" fill="#174a94"/><path d="M0 6h13v12H0z" fill="#1c56ae"/><text x="1" y="16" class="app-letter">W</text></svg></button>
    <button aria-label="Excel"><svg viewBox="0 0 24 24"><path d="M6 1h18v22H6z" fill="#218f53"/><path d="M15 1h9v8h-9z" fill="#37bd79"/><path d="M6 15h18v8H6z" fill="#16653a"/><path d="M0 6h13v12H0z" fill="#107c41"/><text x="3" y="16" class="app-letter">X</text></svg></button>
    <button class="run" aria-label="Zalo"><svg viewBox="0 0 24 24"><path d="M8 1h8c4 0 7 3 7 8v5c0 5-3 8-7 8H8l-6 1 1-5C0 15 0 1 8 1z" fill="#fff" stroke="#1d70d2"/><text x="3" y="14" class="zalo">Zalo</text></svg></button>
    <button class="run now" aria-label="SOLIDWORKS"><svg viewBox="0 0 24 24"><path d="M1 5 7 1h16v13l-4 6H1z" fill="#c52026"/><path d="M1 5h17l5-4" fill="none" stroke="#f08484"/><text x="3" y="13" class="sw">S W</text><text x="4" y="23" class="year">2022</text></svg></button>
    <button class="run" aria-label="Paint"><svg viewBox="0 0 24 24"><ellipse cx="11" cy="14" rx="10" ry="8" fill="#e3eaf0" stroke="#8ea2b3"/><circle cx="6" cy="15" r="2" fill="#3c9bd9"/><circle cx="8" cy="10" r="2" fill="#e4b531"/><circle cx="12" cy="18" r="2" fill="#d24b37"/><path d="M12 17 20 3l3-2-1 4-9 13z" fill="#d8a864" stroke="#8a6532" stroke-width=".6"/></svg></button>
  </nav>
  <div class="tray">
    <button aria-label="Hidden icons"><svg viewBox="0 0 18 18"><path d="M3 12l6-6 6 6" fill="none" stroke="#fff" stroke-width="1.500"/></svg></button>
    <button aria-label="Drive"><svg viewBox="0 0 18 18"><rect x="1" y="1" width="16" height="16" rx="2" fill="#fff"/><path d="M7 4h4l4 7h-4z" fill="#f5bf2a"/><path d="M7 4l2 3-4 7-2-3z" fill="#25a25a"/><path d="M7 11h8l-2 3H5z" fill="#4285f4"/></svg></button>
    <button aria-label="Security"><svg viewBox="0 0 18 18"><path d="M9 1l7 2v6c0 4-3 7-7 8-4-1-7-4-7-8V3z" fill="#fff"/><path d="M9 1v16M2 9h14" stroke="#1e3037"/><path d="M10 9h8v8h-8z" fill="#e34b45"/><path d="M12 11l4 4M16 11l-4 4" stroke="#fff"/></svg></button>
    <button aria-label="Keyboard"><svg viewBox="0 0 18 18"><path d="M1 1h16v16H1z" fill="#f6dcdc"/><path d="M4 4l5 10 5-10" fill="none" stroke="#b32b2f" stroke-width="2.500"/></svg></button>
    <button aria-label="Volume"><svg viewBox="0 0 18 18"><path d="M1 7h3l4-4v12l-4-4H1zM10 6c2 2 2 4 0 6M13 4c3 3 3 7 0 10" fill="none" stroke="#fff"/></svg></button>
    <button aria-label="Battery"><svg viewBox="0 0 18 18"><path d="M2 5h13v8H2zM15 7h2v4h-2" fill="none" stroke="#fff" stroke-width="1.300"/><path d="M4 7h6v4H4z" fill="#fff"/></svg></button>
    <button aria-label="Wi-Fi"><svg viewBox="0 0 18 18"><g fill="none" stroke="#fff" stroke-width="1.300"><path d="M4 16C4 9 9 4 16 4M7 16c0-5 4-9 9-9M10 16c0-3 3-6 6-6"/></g><circle cx="15" cy="15" r="1.500" fill="#fff"/></svg></button>
    <button aria-label="Pen"><svg viewBox="0 0 18 18"><path d="M6 15 8 10l6-8 2 2-6 8zM6 9c-5 0-6 6-1 7 6 0 5-4 12-4" fill="none" stroke="#fff" stroke-width="1.300"/></svg></button>
    <button class="lang">ENG</button>
    <button class="clock">2:41 CH<br>24/12/2022</button>
    <button class="note" aria-label="Notifications"><svg viewBox="0 0 18 18"><path d="M1 2h16v12h-6l-4 3v-3H1z" fill="#fff"/><path d="M4 5h10M4 8h10M4 11h6" stroke="#1e3037"/></svg></button>
  </div>
</div>
</body>
</html>
```
FILE: styles.css
```css
* { box-sizing: border-box; }
html, body { height: 100%; }
body {
  margin: 0;
  display: flex;
  flex-direction: column;
  overflow: hidden;
  background: #f7f7f7;
  color: #111;
  font: 11px/13px "Open Sans", "Noto Sans", sans-serif;
}
button {
  margin: 0; padding: 0; border: 0;
  background: none; color: inherit; font: inherit;
}
h1, h2, p, ul { margin: 0; padding: 0; }
svg { display: block; flex: none; }
.defs { position: absolute; width: 0; height: 0; }

/* title bar */
.titlebar {
  flex: none;
  display: flex;
  align-items: center;
  height: 35px;
  border-top: 1px solid #bbb;
  border-bottom: 1px solid #c4c4c4;
  background: #f7f7f7;
}
.brand {
  display: flex; align-items: center; gap: 2px;
  width: 143px; height: 33px; padding-left: 4px;
}
.brand::after { content: ""; width: 1px; height: 33px; margin-left: 4px; background: #ccc; }
.brand-mark { width: 24px; height: 22px; }
.brand-name { width: 96px; padding-left: 2px; font: italic 13px/20px "Open Sans", sans-serif; color: #c0343a; }
.brand-arrow { width: 6px; height: 10px; }
.quick { display: flex; align-items: center; gap: 8px; margin-left: 25px; }
.ib svg { width: 22px; height: 22px; }
.split { display: flex; align-items: center; gap: 4px; width: 36px; }
.dd { width: 14px; padding: 0 3px; color: #444; }
.dd svg, .tiny { width: 8px; height: 8px; }
.dim .dd { color: #999; }
.select-tool { display: flex; align-items: center; width: 44px; height: 30px; margin-left: -4px; border: 1px solid #888; background: #fff; }
.select-tool .ib { width: 29px; height: 28px; padding: 0 4px; background: #b0b0b0; }
.select-tool .dd { width: 13px; padding: 0 2px; }
.singles { display: flex; gap: 8px; margin-left: -4px; }
.doc-title { flex: 1; font: inherit; text-align: center; white-space: nowrap; }
.title-right { display: flex; align-items: center; gap: 12px; padding-right: 12px; }
.search {
  display: flex; align-items: center; gap: 6px;
  width: 201px; height: 23px; padding: 0 4px 0 6px;
  border: 1px solid #aaa; background: #fff; color: #777;
}
.term { width: 14px; height: 14px; }
.lens { width: 14px; height: 14px; }
.search input { flex: 1; min-width: 0; border: 0; padding: 0; background: none; font: inherit; outline: 0; }
.search input::placeholder { color: #555; opacity: 1; }
.window-buttons { display: flex; gap: 18px; color: #333; }
.window-buttons button { width: 18px; height: 18px; }
.window-buttons svg { width: 18px; height: 18px; }

/* ribbon */
.ribbon { flex: none; display: flex; height: 82px; border-bottom: 1px solid #888; background: #f7f7f7; }
.group { display: flex; margin-bottom: 2px; border-right: 1px solid #c8c8c8; }
.g1 { width: 269px; padding-left: 6px; }
.g2 { width: 269px; padding-left: 2px; }
.g3 { width: 230px; }
.g4 { width: 171px; padding-left: 1px; }
.g4 .w60:first-child { margin-right: 2px; }
.g5 { border: 0; }
.big { display: grid; grid-template-rows: 22px 34px 14px; justify-items: center; align-content: start; padding-top: 5px; text-align: center; }
.big > svg { width: 20px; height: 22px; }
.big > .more { width: 8px; height: 8px; align-self: center; color: #333; }
.w60 { width: 60px; } .w51 { width: 51px; } .w44 { width: 46px; } .w36 { width: 35px; }
.pressed { border: 1px solid #777; background: #b0b0b0; }
.stack { display: flex; flex-direction: column; gap: 6px; padding: 3px 0 0 4px; }
.stack button { display: flex; align-items: center; gap: 6px; height: 20px; white-space: nowrap; }
.stack svg { width: 20px; height: 20px; }
.narrow { width: 63px; }
.g1 .stack { padding-left: 1px; }
.collapse { margin: auto 8px 7px auto; }
.collapse svg { width: 12px; height: 12px; }

/* workspace: the tab strip lies across the top of both columns */
.workspace {
  flex: 1; min-height: 0;
  display: grid;
  grid-template-columns: 298px 1fr;
  grid-template-rows: 22px 1fr;
}
.cmd-tabs { grid-area: 1 / 1 / 2 / 3; z-index: 1; justify-self: start; display: flex; color: #333; }
.cmd-tabs button { height: 22px; border: solid #888; border-width: 0 1px 1px 0; background: #d2d2d2; white-space: nowrap; }
.cmd-tabs .on { width: 64px; border-bottom-color: #f7f7f7; background: #f7f7f7; font-weight: 600; }
.t56 { width: 56px; } .t60 { width: 60px; } .t78 { width: 78px; } .t76 { width: 76px; }
.t87 { width: 87px; } .t83 { width: 83px; } .t134 { width: 133px; }

/* configuration panel */
.panel { grid-area: 2 / 1 / 3 / 2; min-height: 0; display: flex; flex-direction: column; border-right: 1px solid #888; background: #f7f7f7; }
.grip { flex: none; height: 16px; margin: 4px 2px 0 0; border: solid #bbb; border-width: 1px 0; }
.grip i { display: block; width: 6px; height: 6px; margin: 4px 0 0 144px; border: 1px solid #888; border-radius: 50%; background: #ddd; }
.panel-tabs { flex: none; display: flex; height: 30px; margin-right: 2px; padding: 4px 0 0 2px; border-bottom: 1px solid #aaa; }
.panel-tabs button { display: grid; place-items: center; width: 40px; height: 26px; border: solid #999; border-width: 1px 1px 1px 0; background: #d2d2d2; }
.panel-tabs .on { border-bottom-color: #f7f7f7; background: #f7f7f7; }
.panel-tabs svg { width: 19px; height: 19px; }
.panel-title, .states-title { flex: none; font-size: 11px; font-weight: 700; text-align: center; margin-right: 2px; padding-left: 6px; }
.panel-title { height: 32px; line-height: 34px; border-bottom: 1px solid #aaa; }
.tree-wrap { flex: 1; min-height: 0; display: flex; margin-top: 10px; }
.tree { flex: 1; min-width: 0; overflow: hidden; list-style: none; color: #777; }
.tree li { display: flex; align-items: center; height: 22px; padding-left: 48px; white-space: nowrap; }
.tree .root, .tree .folder, .tree .active { color: #111; }
.tree .root { padding-left: 6px; }
.tree .folder { padding-left: 30px; }
.ic { width: 18px; height: 18px; margin-right: 8px; color: #9a9a9a; }
.mk { width: 16px; height: 16px; margin-right: 6px; }
.tw { width: 10px; height: 10px; margin-right: 10px; color: #555; }
.right { transform: rotate(-90deg); margin-right: 8px; }
.root .ic { margin-right: 5px; }
.folder .ic { margin-right: 6px; }
.vscroll { width: 15px; margin-right: 2px; display: flex; flex-direction: column; align-items: center; color: #444; background: #f2f2f2; }
.vscroll svg { width: 12px; height: 16px; }
.vtrack { flex: 1; width: 15px; }
.vtrack i { display: block; width: 15px; height: 30%; background: #c9c9c9; }
.flip { transform: rotate(180deg); }
.hscroll { flex: none; display: flex; align-items: center; height: 16px; padding: 0 20px 0 2px; color: #444; background: #f2f2f2; }
.hscroll svg { width: 12px; height: 12px; }
.hscroll .l { transform: rotate(-90deg); }
.hscroll .r { transform: rotate(90deg); }
.htrack { flex: 1; padding-left: 3px; }
.htrack i { display: block; width: 82%; height: 15px; background: #c9c9c9; }
.states-title { height: 24px; line-height: 24px; border: solid #999; border-width: 1px 0; }
.state { flex: none; display: flex; align-items: center; gap: 5px; height: 59px; padding: 0 0 35px 26px; }
.state svg { width: 18px; height: 18px; }

/* graphics area */
.viewport {
  grid-area: 1 / 2 / 3 / 3;
  position: relative;
  overflow: hidden;
  background:
    linear-gradient(to bottom, rgba(254,254,254,0) 52%, rgba(254,254,254,.35) 58%, rgba(254,254,254,.8) 66%, #fefefe 75%, #fefefe 85%, #f8f8fa 100%),
    radial-gradient(ellipse 76% 52% at 0 0, #fefefe 55%, rgba(254,254,254,.8) 68%, rgba(254,254,254,0) 100%),
    radial-gradient(ellipse 70% 75% at 76% 44%, #d8dbe6 0, #dde1ea 25%, #e6eaf1 44%, #e3e7f0 70%, #e3e7f0 100%);
}
.hud { display: flex; justify-content: center; padding-top: 4px; margin-right: 4px; }
.hud button { width: 26px; height: 22px; padding: 0 3px; }
.hud svg { width: 20px; height: 20px; }
.hud .hd { width: 14px; color: #888; }
.hud .hd svg { width: 8px; height: 8px; }
.mdi { position: absolute; top: 7px; right: 11px; display: flex; gap: 10px; color: #999; }
.mdi svg { width: 16px; height: 16px; }
.taskpane { position: absolute; top: 50px; right: 0; width: 26px; border: solid #888; border-width: 1px 0 0 1px; }
.taskpane button { display: grid; place-items: center; width: 25px; height: 24px; border-bottom: 1px solid #888; background: #d6d6d6; }
.taskpane .on { background: #fff; }
.taskpane svg { width: 19px; height: 19px; }
.splitter { position: absolute; top: 425px; left: 0; width: 8px; height: 39px; border: 1px solid #999; border-left: 0; background: #f7f7f7; }
.splitter i { display: block; width: 5px; height: 5px; border: 1px solid #888; border-radius: 50%; }
.model { position: absolute; left: 465px; top: 267px; width: 690px; height: 490px; overflow: visible; }
.watermark {
  position: absolute; left: 319px; top: 380px;
  display: flex; align-items: flex-start;
  color: rgba(255,255,255,.75);
  font: 60px/90px "Liberation Mono", monospace;
  white-space: nowrap;
}
.watermark span { font: 300 72px/74px "Noto Sans CJK SC", sans-serif; }
.triad { position: absolute; left: 27px; bottom: 47px; width: 50px; height: 50px; }
.axis { position: absolute; font-size: 10px; }
.axis.y { left: 38px; bottom: 88px; color: #2b7a4c; }
.axis.x { left: 71px; bottom: 50px; color: #b3232a; }
.view-name { position: absolute; left: 12px; bottom: 3px; font-weight: 700; }

/* document tabs and status */
.doc-tabs { flex: none; display: flex; height: 17px; border: solid #888; border-width: 1px 0; color: #333; }
.doc-tabs > button { height: 15px; border-right: 1px solid #888; background: #d2d2d2; line-height: 12px; }
.doc-tabs > .on { background: #f7f7f7; color: #111; font-weight: 700; }
.d57 { width: 57px; } .d68 { width: 68px; } .d108 { width: 108px; }
.pager { display: flex; width: 67px; padding-left: 2px; }
.pager button { flex: 1; height: 15px; border: 1px solid #888; background: #aaa; color: #777; font-size: 10px; line-height: 10px; }
.status { flex: none; display: flex; align-items: center; height: 18px; background: #f7f7f7; }
.product { margin: 0 auto 0 1px; }
.rebuild { width: 16px; height: 16px; margin-right: 71px; }
.units { width: 43px; margin-right: 12px; }
.tag { width: 18px; height: 14px; margin: 0 2px 0 24px; }

/* Windows taskbar */
.taskbar { flex: none; display: flex; justify-content: space-between; height: 40px; background: #1e3038; color: #fff; }
.apps { display: flex; }
.apps button { display: grid; place-items: center; width: 49px; height: 40px; padding-right: 2px; border-bottom: 2px solid transparent; }
.apps svg { width: 24px; height: 24px; }
.apps .run { border-bottom-color: #a9d8ee; }
.apps .now { background: #4a585f; }
.app-letter { fill: #fff; font: 700 10px "Open Sans", sans-serif; }
.zalo { fill: #1d64c8; font: 700 8px "Open Sans", sans-serif; }
.sw { fill: #fff; font: 700 9px "Open Sans", sans-serif; }
.year { fill: #fff; font: 700 8px "Open Sans", sans-serif; }
.tray { display: flex; align-items: center; padding-right: 9px; }
.tray button { display: grid; place-items: center; width: 32px; height: 40px; padding-right: 2px; }
.tray svg { width: 18px; height: 18px; }
.tray .lang { width: 44px; padding: 0; }
.tray .clock { width: 64px; padding: 0; line-height: 18px; text-align: center; }
.tray .note { width: 48px; }
```
